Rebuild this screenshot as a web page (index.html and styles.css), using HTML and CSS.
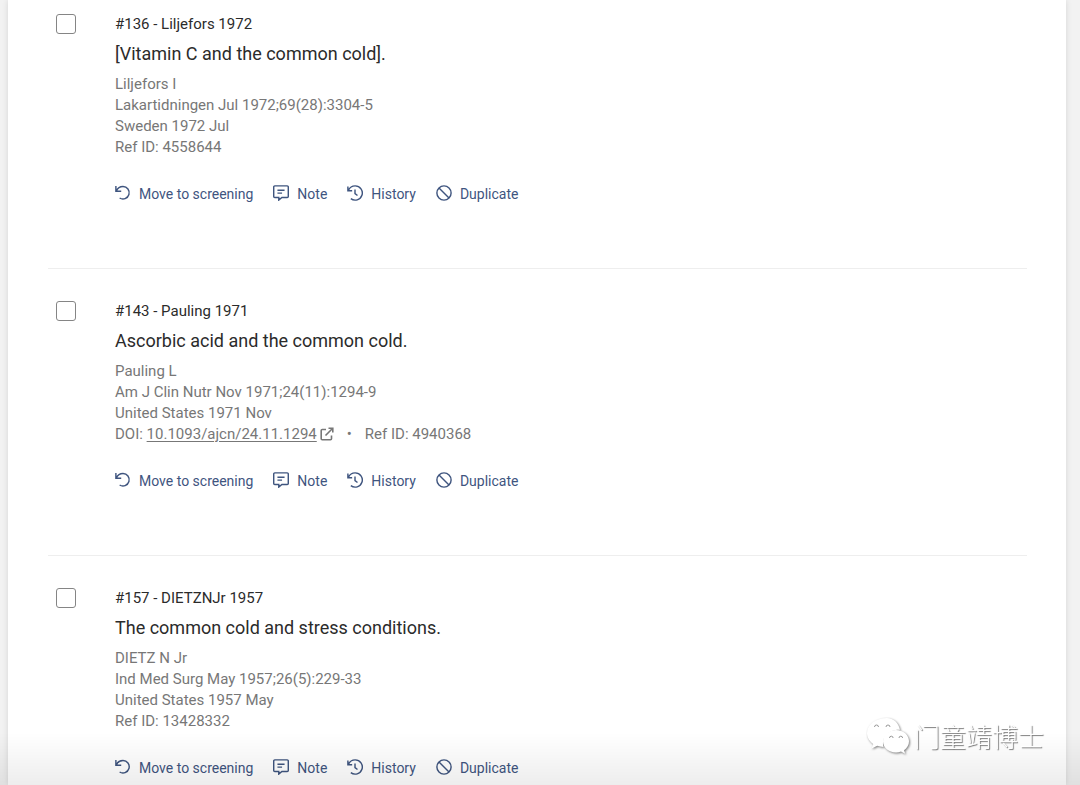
FILE: index.html
```
<!DOCTYPE html>
<html lang="en">
<head>
  <meta charset="UTF-8" />
  <meta name="viewport" content="width=device-width, initial-scale=1.0"/>
  <title>References</title>
  <link rel="stylesheet" href="styles.css">
</head>
<body>

<!-- Icons -->
<svg class="sprite" aria-hidden="true">
  <symbol id="icon-undo" viewBox="0 0 18 18">
    <path d="M1 1v6h6M1.500 6.600C3 3.300 5.600 1.700 9 1.700a7 7 0 1 1-3.800 12.900"/>
  </symbol>
  <symbol id="icon-note" viewBox="0 0 18 18">
    <path d="M2 1h14a1.200 1.200 0 0 1 1.200 1.200v10.600a1.200 1.200 0 0 1-1.200 1.200H10L6.500 17v-3H2a1.200 1.200 0 0 1-1.200-1.200V2.200A1.200 1.200 0 0 1 2 1zM5 5.900h8M5 9.100h5.200"/>
  </symbol>
  <symbol id="icon-history" viewBox="0 0 18 18">
    <path d="M1 1.600v4.800h4.800M1.500 6C3 2.900 5.700 1 9.200 1a8 8 0 1 1-4.900 14.300M9 5v4.600l2.800 2.200"/>
  </symbol>
  <symbol id="icon-ban" viewBox="0 0 18 18">
    <circle cx="9" cy="9" r="8"/>
    <path d="M3.400 3.400l11.200 11.200"/>
  </symbol>
  <symbol id="icon-external" viewBox="0 0 14 14">
    <path d="M6 2.500H2.200a1 1 0 0 0-1 1v8.300a1 1 0 0 0 1 1h8.300a1 1 0 0 0 1-1V8.500M8.500 1.200h4.300v4.300M12.500 1.500L5.500 8.500"/>
  </symbol>
</svg>

<main class="panel">

  <article class="reference">
    <input type="checkbox" id="ref136" aria-labelledby="name136">
    <div class="details">
      <label class="name" id="name136" for="ref136">#136 - Liljefors 1972</label>
      <h2>[Vitamin C and the common cold].</h2>
      <div class="meta">
        <p>Liljefors I</p>
        <p>Lakartidningen Jul 1972;69(28):3304-5</p>
        <p>Sweden 1972 Jul</p>
        <p>Ref ID: 4558644</p>
      </div>
      <div class="actions">
        <button type="button"><svg><use href="#icon-undo"/></svg>Move to screening</button>
        <button type="button"><svg><use href="#icon-note"/></svg>Note</button>
        <button type="button"><svg><use href="#icon-history"/></svg>History</button>
        <button type="button"><svg><use href="#icon-ban"/></svg>Duplicate</button>
      </div>
    </div>
  </article>

  <article class="reference">
    <input type="checkbox" id="ref143" aria-labelledby="name143">
    <div class="details">
      <label class="name" id="name143" for="ref143">#143 - Pauling 1971</label>
      <h2>Ascorbic acid and the common cold.</h2>
      <div class="meta">
        <p>Pauling L</p>
        <p>Am J Clin Nutr Nov 1971;24(11):1294-9</p>
        <p>United States 1971 Nov</p>
        <p class="ids">
          <span>DOI: <a href="#">10.1093/ajcn/24.11.1294</a><svg class="external"><use href="#icon-external"/></svg></span>
          <span>•</span>
          <span>Ref ID: 4940368</span>
        </p>
      </div>
      <div class="actions">
        <button type="button"><svg><use href="#icon-undo"/></svg>Move to screening</button>
        <button type="button"><svg><use href="#icon-note"/></svg>Note</button>
        <button type="button"><svg><use href="#icon-history"/></svg>History</button>
        <button type="button"><svg><use href="#icon-ban"/></svg>Duplicate</button>
      </div>
    </div>
  </article>

  <article class="reference">
    <input type="checkbox" id="ref157" aria-labelledby="name157">
    <div class="details">
      <label class="name" id="name157" for="ref157">#157 - DIETZNJr 1957</label>
      <h2>The common cold and stress conditions.</h2>
      <div class="meta">
        <p>DIETZ N Jr</p>
        <p>Ind Med Surg May 1957;26(5):229-33</p>
        <p>United States 1957 May</p>
        <p>Ref ID: 13428332</p>
      </div>
      <div class="actions">
        <button type="button"><svg><use href="#icon-undo"/></svg>Move to screening</button>
        <button type="button"><svg><use href="#icon-note"/></svg>Note</button>
        <button type="button"><svg><use href="#icon-history"/></svg>History</button>
        <button type="button"><svg><use href="#icon-ban"/></svg>Duplicate</button>
      </div>
    </div>
  </article>

</main>

<div class="fade"></div>

<div class="watermark" lang="zh">
  <svg viewBox="0 0 44 38">
    <path d="M22 1C11 1 2 7.500 2 16c0 4.500 2.500 8.300 6.300 11L6.500 31.500l5.800-2.800c2 .7 4 1.200 6.200 1.300C16 20 24 12.500 35 12.800 33.500 6 28.500 1 22 1z"/>
    <path d="M31 13c-7.500 0-13 5-13 11.300S23.500 35.500 31 35.500c1.800 0 3.400-.3 5-.9l4.200 2.200-1.200-3.600c3-2 5-5.200 5-8.900C44 18 38.500 13 31 13z"/>
    <path class="eye" d="M9.500 10a2 2 0 0 1 4 0M21 10a2 2 0 0 1 4 0M24.500 21a1.800 1.800 0 0 1 3.600 0M34 21a1.800 1.800 0 0 1 3.600 0"/>
  </svg>
  <span>门童靖博士</span>
</div>

</body>
</html>
```
FILE: styles.css
```
* {
  box-sizing: border-box;
}

body {
  margin: 0;
  padding: 0 14px 0 8px;
  font-family: Roboto, Arial, sans-serif;
  font-size: 15px;
  background: #f2f2f2;
  color: #2b2b2b;
}

.sprite {
  position: absolute;
  width: 0;
  height: 0;
}

.panel {
  min-height: 100vh;
  padding: 0 39px 0 40px;
  background: white;
  box-shadow: 0 0 6px rgba(0,0,0,0.12);
}

.reference {
  display: flex;
  align-items: flex-start;
  gap: 39px;
  padding: 32px 8px 64px;
  border-bottom: 1px solid #eeeeee;
}

.reference:first-child {
  padding-top: 14px;
}

.reference:last-child {
  padding-bottom: 6px;
  border-bottom: none;
}

.reference input {
  appearance: none;
  flex: none;
  width: 20px;
  height: 20px;
  margin: 0;
  border: 1px solid #858585;
  border-radius: 3px;
  background: white;
}

.name {
  display: block;
  line-height: 20px;
}

h2 {
  margin: 8px 0;
  font-size: 18px;
  font-weight: 400;
  line-height: 24px;
}

.meta {
  color: #777777;
  line-height: 21px;
}

.meta p {
  margin: 0;
}

.meta a {
  color: inherit;
  text-underline-offset: 2px;
}

.meta .ids {
  display: flex;
  gap: 13px;
}

.external {
  width: 14px;
  height: 14px;
  margin-left: 3px;
  vertical-align: -2px;
}

.actions {
  display: flex;
  gap: 20px;
  margin-top: 26px;
}

button {
  display: flex;
  align-items: center;
  gap: 8px;
  padding: 0;
  border: none;
  background: none;
  color: #3f557f;
  font-family: inherit;
  font-size: 14px;
  line-height: 20px;
  cursor: pointer;
}

svg {
  fill: none;
  stroke: currentColor;
  stroke-width: 1.6;
}

button svg {
  width: 16px;
  height: 16px;
  margin-bottom: 2px;
  overflow: visible;
}

.fade {
  position: fixed;
  left: 0;
  right: 0;
  bottom: 0;
  height: 52px;
  background: linear-gradient(rgba(0,0,0,0), rgba(0,0,0,0.07));
  pointer-events: none;
}

.watermark {
  position: fixed;
  right: 36px;
  bottom: 30px;
  display: flex;
  align-items: center;
  gap: 5px;
  color: white;
  font-family: "Noto Sans CJK SC", sans-serif;
  font-size: 26px;
  font-weight: 300;
  line-height: 38px;
  text-shadow: 1px 1px 1px #777777;
}

.watermark svg {
  width: 44px;
  height: 38px;
  fill: white;
  stroke: none;
  filter: drop-shadow(1px 1px 1px rgba(0,0,0,0.5));
}

.watermark .eye {
  fill: none;
  stroke: #999999;
  stroke-width: 1;
}
```
